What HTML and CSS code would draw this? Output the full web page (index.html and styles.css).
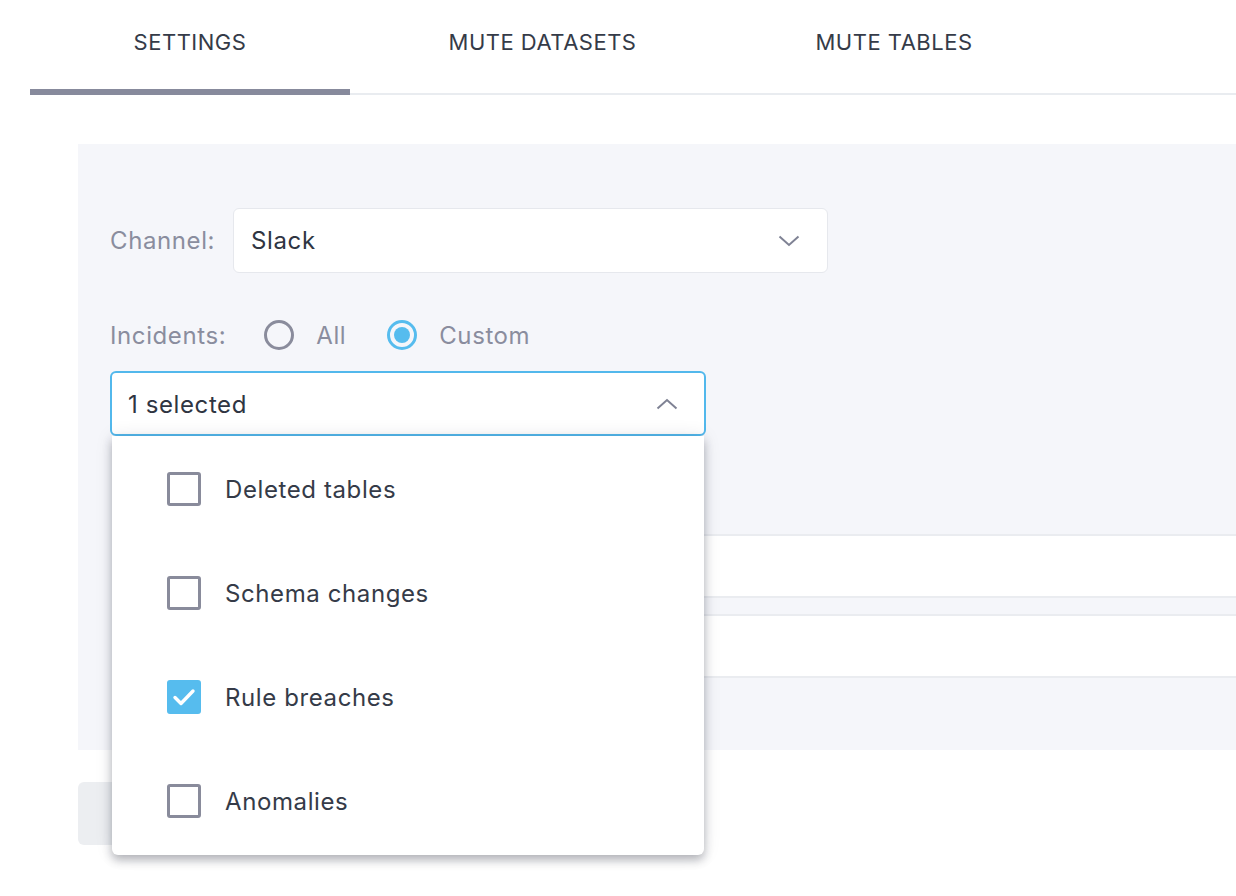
FILE: index.html
```html
<!DOCTYPE html>
<html>
<head>
<meta charset="utf-8">
<link rel="stylesheet" href="styles.css">
</head>
<body>
<div class="page">
  <nav class="tabs">
    <div class="tab tab-settings active">SETTINGS</div>
    <div class="tab tab-datasets">MUTE DATASETS</div>
    <div class="tab tab-tables">MUTE TABLES</div>
  </nav>

  <section class="panel">
    <div class="row channel-row">
      <span class="label">Channel:</span>
      <div class="select channel-select">
        <span class="value">Slack</span>
        <svg class="chev" width="22" height="12" viewBox="0 0 22 12"><path d="M1.5 1.5 L11 10 L20.5 1.5" fill="none" stroke="#7f8294" stroke-width="2"/></svg>
      </div>
    </div>

    <div class="row incidents-row">
      <span class="label">Incidents:</span>
      <label class="radio"><span class="circle"></span><span class="rtext">All</span></label>
      <label class="radio checked"><span class="circle"><span class="dot"></span></span><span class="rtext">Custom</span></label>
    </div>

    <div class="multi-wrap">
      <div class="select multi-select">
        <span class="value">1 selected</span>
        <svg class="chev" width="22" height="12" viewBox="0 0 22 12"><path d="M1.5 10.5 L11 2 L20.5 10.5" fill="none" stroke="#7f8294" stroke-width="2"/></svg>
      </div>
      <ul class="menu">
        <li class="item"><span class="box"></span><span class="itext">Deleted tables</span></li>
        <li class="item"><span class="box"></span><span class="itext">Schema changes</span></li>
        <li class="item"><span class="box checked"><svg width="24" height="20" viewBox="0 0 24 20"><path d="M3 10.5 L9 16.5 L21 4" fill="none" stroke="#fff" stroke-width="3.4" stroke-linecap="round" stroke-linejoin="round"/></svg></span><span class="itext">Rule breaches</span></li>
        <li class="item"><span class="box"></span><span class="itext">Anomalies</span></li>
      </ul>
    </div>

    <div class="table-rows">
      <div class="trow"></div>
      <div class="trow"></div>
    </div>
  </section>

  <div class="actions">
    <button class="btn"></button>
  </div>
</div>
</body>
</html>
```

FILE: styles.css
```css
* { box-sizing: border-box; }
html, body { margin: 0; padding: 0; background: #ffffff; }
body {
  font-family: "Inter", "Liberation Sans", sans-serif;
  color: #2f3542;
  width: 1236px;
  height: 896px;
  overflow: hidden;
}
.page { padding-left: 30px; }

.tabs {
  display: flex;
  height: 95px;
  border-bottom: 2px solid #e9ecf0;
}
.tab {
  font-size: 22px;
  color: #353b48;
  letter-spacing: 0.5px;
  padding-top: 29px;
  text-align: center;
}
.tab-settings { width: 320px; }
.tab-datasets { width: 385px; }
.tab-tables { width: 318px; }
.tab.active {
  border-bottom: 6px solid #878a9c;
  margin-bottom: -2px;
}

.panel {
  margin-top: 49px;
  margin-left: 48px;
  background: #f5f6fa;
  height: 606px;
  padding: 64px 0 0 32px;
  position: relative;
}

.row { display: flex; align-items: center; }
.label, .value, .rtext, .itext { font-size: 24px; letter-spacing: 0.6px; }
.label { color: #8a8d9e; }

.channel-row { gap: 18px; }
.select {
  background: #fff;
  border-radius: 6px;
  display: flex;
  align-items: center;
  justify-content: space-between;
  color: #2f3542;
}
.channel-select {
  width: 595px;
  height: 65px;
  border: 1px solid #e6e8ed;
  padding: 0 27px 0 17px;
}

.incidents-row { margin-top: 30px; height: 64px; }
.radio { display: flex; align-items: center; margin-left: 38px; }
.radio + .radio { margin-left: 41px; }
.radio .circle {
  width: 30px; height: 30px;
  border: 3px solid #8a8c9c;
  border-radius: 50%;
  display: flex; align-items: center; justify-content: center;
}
.radio.checked .circle { border-color: #56bcee; }
.radio .dot { width: 16px; height: 16px; border-radius: 50%; background: #56bcee; }
.radio .rtext { color: #8a8d9e; margin-left: 22px; }

.multi-wrap { margin-top: 4px; width: 596px; position: relative; z-index: 2; }
.multi-select {
  height: 65px;
  border: 2px solid #52b8ec;
  padding: 0 26px 0 16px;
}
.multi-select .value { padding-top: 2px; }
.menu {
  list-style: none;
  margin: 0 2px;
  padding: 1px 0 2px;
  position: absolute;
  left: 0; right: 0;
  top: 65px;
  background: #fff;
  border-radius: 0 0 6px 6px;
  box-shadow: 0 5px 10px rgba(40, 44, 60, 0.32), 0 0 18px rgba(40, 44, 60, 0.10);
}
.item {
  height: 104px;
  display: flex;
  align-items: center;
  padding-left: 55px;
}
.box {
  width: 34px; height: 34px;
  border: 3px solid #898b9b;
  border-radius: 3px;
  display: flex; align-items: center; justify-content: center;
}
.box.checked { background: #56bcee; border-color: #56bcee; }
.itext { color: #353b48; margin-left: 24px; }

.table-rows {
  position: absolute;
  left: 34px; right: 0;
  top: 390px;
}
.trow {
  height: 64px;
  background: #fff;
  border-top: 2px solid #eaecf0;
  border-bottom: 2px solid #eaecf0;
}
.trow + .trow { margin-top: 16px; }

.actions { padding-left: 48px; margin-top: 32px; }
.btn {
  width: 130px; height: 63px;
  border: none;
  background: #eceef1;
  border-radius: 6px;
}
```
